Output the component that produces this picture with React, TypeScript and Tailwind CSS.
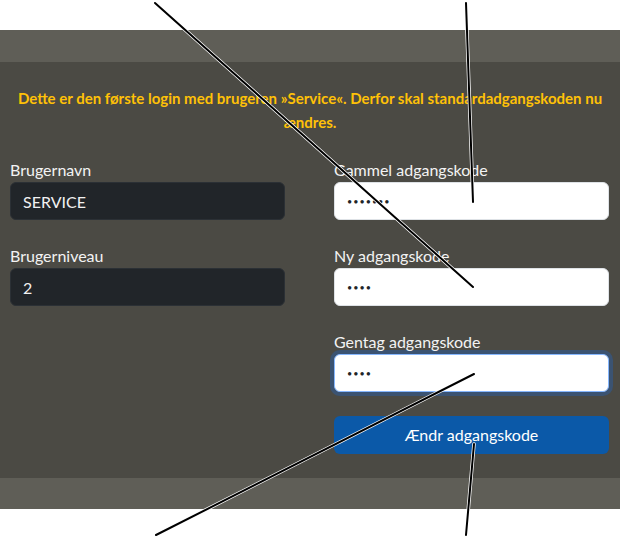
import React from "react";

const font = { fontFamily: "Lato, 'Open Sans', sans-serif" };

function Field({
  label,
  value,
  type = "text",
  dark = false,
  focused = false,
}: {
  label: string;
  value: string;
  type?: string;
  dark?: boolean;
  focused?: boolean;
}) {
  const size = type === "password" ? "text-[9px] tracking-[1px]" : "text-[16px]";
  const base = "block w-full h-[38px] rounded-[6px] px-3 outline-none";
  const look = dark
    ? "bg-[#212529] text-[#f1f1f1] border border-[#2b3035]"
    : focused
    ? "bg-white text-[#212529] border border-[#86b7fe] ring-4 ring-[#0d6efd]/25"
    : "bg-white text-[#212529] border border-[#dee2e6]";
  return (
    <div className="mb-6">
      <label className="block text-[16px] leading-6 text-[#f3f3f3]">{label}</label>
      <input className={`${base} ${size} ${look}`} type={type} value={value} readOnly />
    </div>
  );
}

export default function App() {
  return (
    <div className="relative h-[540px] w-[620px] bg-white pt-[30px] overflow-hidden" style={font}>
      <div className="h-8 bg-[#5f5e57]" />
      <main className="bg-[#4b4a44] pt-6 pb-6 px-[10px]">
        <p className="text-center text-[15px] leading-6 font-bold text-[#ffc107] px-[6px] mb-6">
          Dette er den første login med brugeren »Service«. Derfor skal standardadgangskoden nu ændres.
        </p>
        <div className="grid grid-cols-[275px_275px] gap-x-[49px]">
          <div>
            <Field label="Brugernavn" value="SERVICE" dark />
            <Field label="Brugerniveau" value="2" dark />
          </div>
          <div>
            <Field label="Gammel adgangskode" value="1234567" type="password" />
            <Field label="Ny adgangskode" value="1234" type="password" />
            <Field label="Gentag adgangskode" value="1234" type="password" focused />
            <button className="block w-full h-[38px] rounded-[6px] bg-[#0b59a8] text-white text-[16px]">
              Ændr adgangskode
            </button>
          </div>
        </div>
      </main>
      <div className="h-[31px] bg-[#5f5e57]" />

      <svg
        className="pointer-events-none absolute inset-0"
        width="620"
        height="540"
        viewBox="0 0 620 540"
      >
        <g stroke="#ffffff" strokeWidth="3.5" strokeLinecap="round">
          <line x1="155" y1="3" x2="473" y2="287" />
          <line x1="466" y1="3" x2="473" y2="202" />
          <line x1="156" y1="535" x2="474" y2="374" />
          <line x1="466" y1="535" x2="474" y2="444" />
        </g>
        <g stroke="#000000" strokeWidth="2" strokeLinecap="round">
          <line x1="155" y1="3" x2="473" y2="287" />
          <line x1="466" y1="3" x2="473" y2="202" />
          <line x1="156" y1="535" x2="474" y2="374" />
          <line x1="466" y1="535" x2="474" y2="444" />
        </g>
      </svg>
    </div>
  );
}
